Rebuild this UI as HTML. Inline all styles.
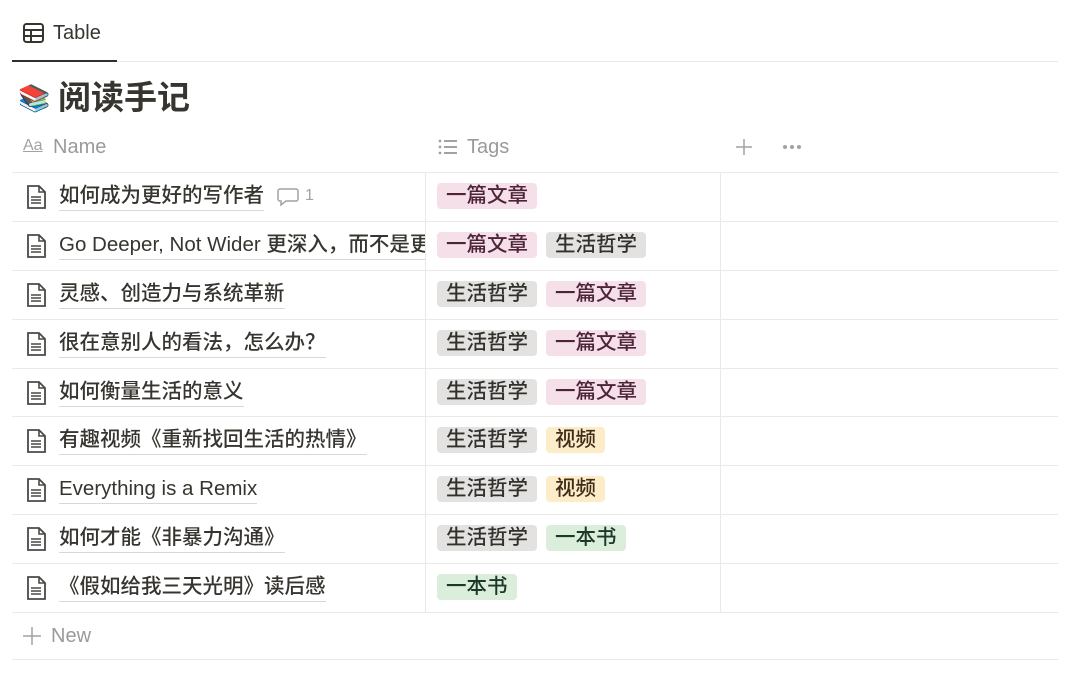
<!DOCTYPE html>
<html><head><meta charset="utf-8"><style>
*{margin:0;padding:0;box-sizing:border-box}
body{width:1080px;height:684px;background:#fff;font-family:"Liberation Sans","Noto Sans CJK SC",sans-serif;color:#37352f;position:relative;overflow:hidden}
.a{position:absolute}
.hl{position:absolute;left:12px;width:1046px;height:1px;background:#e9e9e7}
.vl{position:absolute;width:1px;background:#e9e9e7}
.row{position:absolute;left:12px;width:1046px;height:49px}
.doc{position:absolute;left:14px;top:13px}
.nm{position:absolute;left:47px;top:10px;font-size:20.5px;line-height:28px;font-weight:500;white-space:nowrap;border-bottom:1px solid #d9d8d5;max-width:366px;overflow:hidden}
.tags{position:absolute;left:425px;top:11px;display:flex;gap:9px}
.t{height:26px;line-height:26px;padding:0 9px;border-radius:4px;font-size:20.5px;font-weight:500;white-space:nowrap}
.p{background:#f5e0e9;color:#4c2337}
.g{background:#e3e2e0;color:#32302c}
.y{background:#fdecc8;color:#402c1b}
.gr{background:#dbeddb;color:#1c3829}
</style></head><body>
<svg class="a" style="left:23px;top:23px" width="21" height="20" viewBox="0 0 21 20"><rect x="1" y="1" width="19" height="18" rx="2.5" fill="none" stroke="#37352f" stroke-width="2"/><line x1="1" y1="7" x2="20" y2="7" stroke="#37352f" stroke-width="2"/><line x1="1" y1="13" x2="20" y2="13" stroke="#37352f" stroke-width="2"/><line x1="8" y1="7" x2="8" y2="19" stroke="#37352f" stroke-width="2"/></svg>
<div class="a" style="left:53px;top:20px;font-size:20px;line-height:26px;font-weight:500">Table</div>
<div class="hl" style="top:61px"></div>
<div class="a" style="left:12px;top:60px;width:105px;height:2px;background:#2f2f2f"></div>
<div class="a" style="left:18px;top:80px;font-size:26px;line-height:36px">📚</div>
<div class="a" style="left:58px;top:77px;font-size:33px;line-height:42px;font-weight:bold">阅读手记</div>
<div class="a" style="left:23px;top:137px;font-size:16px;color:#a3a29e;text-decoration:underline">Aa</div>
<div class="a" style="left:53px;top:133px;font-size:20px;line-height:28px;color:#9b9a97">Name</div>
<svg class="a" style="left:438px;top:139px" width="19" height="16" viewBox="0 0 19 16"><g fill="#a3a29e"><circle cx="2" cy="2" r="1.4"/><circle cx="2" cy="8" r="1.4"/><circle cx="2" cy="14" r="1.4"/><rect x="6" y="1" width="13" height="2"/><rect x="6" y="7" width="13" height="2"/><rect x="6" y="13" width="13" height="2"/></g></svg>
<div class="a" style="left:467px;top:133px;font-size:20px;line-height:28px;color:#9b9a97">Tags</div>
<svg class="a" style="left:736px;top:139px" width="16" height="16" viewBox="0 0 16 16"><path d="M8 0v16M0 8h16" stroke="#a3a29e" stroke-width="1.5"/></svg>
<svg class="a" style="left:782px;top:144px" width="20" height="6" viewBox="0 0 20 6"><g fill="#a3a29e"><circle cx="3" cy="3" r="2"/><circle cx="10" cy="3" r="2"/><circle cx="17" cy="3" r="2"/></g></svg>
<div class="hl" style="top:172px"></div>
<div class="vl" style="left:425px;top:172px;height:440px"></div>
<div class="vl" style="left:720px;top:172px;height:440px"></div>

<div id="rows"></div>
<div class="hl" style="top:612px"></div>
<svg class="a" style="left:23px;top:627px" width="18" height="18" viewBox="0 0 18 18"><path d="M9 0v18M0 9h18" stroke="#a3a29e" stroke-width="1.5"/></svg>
<div class="a" style="left:51px;top:622px;font-size:20px;line-height:28px;color:#9b9a97">New</div>
<div class="hl" style="top:659px"></div>

<script>
var D=[["如何成为更好的写作者",[["一篇文章","p"]],1],
["Go Deeper, Not Wider 更深入，而不是更广",[["一篇文章","p"],["生活哲学","g"]]],
["灵感、创造力与系统革新",[["生活哲学","g"],["一篇文章","p"]]],
["很在意别人的看法，怎么办？",[["生活哲学","g"],["一篇文章","p"]]],
["如何衡量生活的意义",[["生活哲学","g"],["一篇文章","p"]]],
["有趣视频《重新找回生活的热情》",[["生活哲学","g"],["视频","y"]]],
["Everything is a Remix",[["生活哲学","g"],["视频","y"]]],
["如何才能《非暴力沟通》",[["生活哲学","g"],["一本书","gr"]]],
["《假如给我三天光明》读后感",[["一本书","gr"]]]];
var h="";var tops=[172,221,270,319,368,416,465,514,563];
D.forEach(function(r,i){
h+='<div class="row" style="top:'+tops[i]+'px">';
h+='<svg class="doc" width="20" height="24" viewBox="0 0 20 24"><path d="M2 1h11l6 6v16H2z" fill="none" stroke="#4a4945" stroke-width="1.8"/><path d="M13 1v6h6" fill="none" stroke="#4a4945" stroke-width="1.6"/><path d="M5 12h10M5 15h10M5 18h10" stroke="#4a4945" stroke-width="1.5"/></svg>';
h+='<div class="nm">'+r[0]+'</div>';
if(r[2])h+='<svg class="a" style="left:265px;top:16px" width="22" height="19" viewBox="0 0 22 19"><path d="M3 1h16a2 2 0 0 1 2 2v8a2 2 0 0 1-2 2H9l-5 4v-4H3a2 2 0 0 1-2-2V3a2 2 0 0 1 2-2z" fill="none" stroke="#a3a29e" stroke-width="1.5"/></svg><div class="a" style="left:293px;top:15px;font-size:16px;color:#a3a29e">1</div>';
h+='<div class="tags">';r[1].forEach(function(t){h+='<span class="t '+t[1]+'">'+t[0]+'</span>'});
h+='</div></div>';if(i<8)h+='<div class="hl" style="top:'+tops[i+1]+'px"></div>';});
document.getElementById("rows").outerHTML=h;
</script>
</body></html>
